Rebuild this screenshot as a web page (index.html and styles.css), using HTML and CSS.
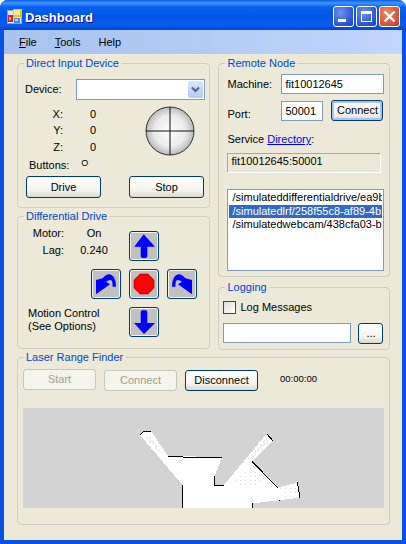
FILE: index.html
```html
<!DOCTYPE html>
<html lang="en">
<head>
  <meta charset="UTF-8">
  <title>Dashboard</title>
  <link rel="stylesheet" href="styles.css">
</head>
<body>
  <div class="window">
    <div class="titlebar">
      <svg class="app-icon" width="16" height="16" viewBox="0 0 16 16">
        <rect x="0" y="1" width="15" height="14" fill="#8fa3c8"/>
        <rect x="1" y="2" width="13" height="12" fill="#dfe6f2"/>
        <rect x="1" y="6" width="5" height="7" fill="#d8261c"/>
        <rect x="2" y="8" width="2" height="3" fill="#f7b0a0"/>
        <rect x="6" y="0" width="9" height="8" fill="#f5c400"/>
        <rect x="7" y="1" width="6" height="5" fill="#ffe98a"/>
        <rect x="7" y="9" width="6" height="5" fill="#4f86d8"/>
        <rect x="8" y="10" width="3" height="2" fill="#bcd4f5"/>
      </svg>
      <span class="title">Dashboard</span>
      <div class="caption-btns">
        <span class="cap-btn">
          <svg width="19" height="19" viewBox="0 0 19 19"><rect x="4" y="12" width="8" height="3" fill="#fff"/></svg>
        </span>
        <span class="cap-btn">
          <svg width="19" height="19" viewBox="0 0 19 19"><path d="M4 4h11v11H4z M5 7v7h9V7z" fill="#fff" fill-rule="evenodd"/></svg>
        </span>
        <span class="cap-btn cap-close">
          <svg width="19" height="19" viewBox="0 0 19 19"><path d="M4.500 4.500l10 10M14.500 4.500l-10 10" stroke="#fff" stroke-width="2.400"/></svg>
        </span>
      </div>
    </div>

    <div class="menubar">
      <span><u>F</u>ile</span>
      <span><u>T</u>ools</span>
      <span>Help</span>
    </div>

    <div class="client">
      <div class="top-row">
        <div class="col col-left">
          <fieldset class="group group-input">
            <legend>Direct Input Device</legend>
            <div class="input-body">
              <div class="device-row">
                <label class="device-label">Device:</label>
                <div class="combo">
                  <span class="combo-btn">
                    <svg width="15" height="17" viewBox="0 0 15 17"><path d="M4 6.500l3.500 3.500L11 6.500" fill="none" stroke="#4d6185" stroke-width="2"/></svg>
                  </span>
                </div>
              </div>
              <div class="axes-row">
                <div class="axes">
                  <span class="axis-name">X:</span><span>0</span>
                  <span class="axis-name">Y:</span><span>0</span>
                  <span class="axis-name">Z:</span><span>0</span>
                </div>
                <svg class="joystick" width="50" height="50" viewBox="0 0 50 50">
                  <defs>
                    <radialGradient id="ball" cx="50%" cy="50%" r="50%">
                      <stop offset="0" stop-color="#fdfdfd"/>
                      <stop offset="0.65" stop-color="#ebebeb"/>
                      <stop offset="1" stop-color="#b8b8b8"/>
                    </radialGradient>
                  </defs>
                  <circle cx="25" cy="25" r="24" fill="url(#ball)" stroke="#333" stroke-width="1"/>
                  <path d="M25 1v48M1 25h48" stroke="#111" stroke-width="1"/>
                </svg>
              </div>
              <div class="buttons-line">
                <span>Buttons:</span><span class="buttons-val">O</span>
              </div>
              <div class="drive-row">
                <button class="btn btn-drive">Drive</button>
                <button class="btn btn-drive">Stop</button>
              </div>
            </div>
          </fieldset>

          <fieldset class="group group-drive">
            <legend>Differential Drive</legend>
            <div class="drive-pad">
              <div class="drive-stats">
                <span class="stat-name">Motor:</span><span class="stat-val">On</span>
                <span class="stat-name">Lag:</span><span class="stat-val">0.240</span>
              </div>
              <button class="arrow arrow-up">
                <svg width="28" height="28" viewBox="1 1 28 28"><path d="M14.700 3.300L26 15.700h-7.700V25q0 2-3.300 2t-3.300-2v-9.300H5.300z" fill="#0000ff"/></svg>
              </button>
              <button class="arrow arrow-left">
                <svg width="28" height="28" viewBox="1 1 28 28"><path d="M5 11l6.700-1.700Q15 5 19 5.300 25 7 25 17.700h-3.500Q22 11.500 19.500 11 17 11 15 12.700l4 2.600L5 25.300z" fill="#0000ff"/></svg>
              </button>
              <button class="arrow">
                <svg width="28" height="28" viewBox="1 1 28 28"><path d="M11 5h8l6 6v8l-6 6h-8l-6-6v-8z" fill="#ff0000" stroke="#a00000" stroke-width="0.600"/></svg>
              </button>
              <button class="arrow">
                <svg width="28" height="28" viewBox="1 1 28 28"><g transform="matrix(-1 0 0 1 30 0)"><path d="M5 11l6.700-1.700Q15 5 19 5.300 25 7 25 17.700h-3.500Q22 11.500 19.500 11 17 11 15 12.700l4 2.600L5 25.300z" fill="#0000ff"/></g></svg>
              </button>
              <div class="motion-note">Motion Control<br>(See Options)</div>
              <button class="arrow arrow-down">
                <svg width="28" height="28" viewBox="1 1 28 28"><path d="M11.700 5q0-2 3.300-2t3.300 2v11H26L15 27 5 16h6.700z" fill="#0000ff"/></svg>
              </button>
            </div>
          </fieldset>
        </div>

        <div class="col col-right">
          <fieldset class="group group-remote">
            <legend>Remote Node</legend>
            <div class="remote-body">
              <div class="form-row">
                <label class="form-label">Machine:</label>
                <input class="field field-machine" value="fit10012645">
              </div>
              <div class="form-row port-row">
                <label class="form-label port-label">Port:</label>
                <input class="field field-port" value="50001">
                <button class="btn btn-default">Connect</button>
              </div>
              <div class="service-line">Service <a href="#">Directory</a>:</div>
              <div class="readonly-box">fit10012645:50001</div>
              <ul class="service-list">
                <li>/simulateddifferentialdrive/ea9b4</li>
                <li class="selected">/simulatedlrf/258f55c8-af89-4b1</li>
                <li>/simulatedwebcam/438cfa03-b0</li>
              </ul>
            </div>
          </fieldset>

          <fieldset class="group group-logging">
            <legend>Logging</legend>
            <div class="logging-body">
              <div class="log-check">
                <span class="checkbox"></span>
                <span>Log Messages</span>
              </div>
              <div class="log-file">
                <input class="field field-log">
                <button class="btn btn-browse">...</button>
              </div>
            </div>
          </fieldset>
        </div>
      </div>

      <fieldset class="group group-laser">
        <legend>Laser Range Finder</legend>
        <div class="laser-body">
          <div class="laser-bar">
            <button class="btn btn-laser btn-start" disabled>Start</button>
            <button class="btn btn-laser" disabled>Connect</button>
            <button class="btn btn-laser">Disconnect</button>
            <span class="timer">00:00:00</span>
          </div>
          <svg class="scan" width="361" height="100" viewBox="23 408 361 100" shape-rendering="crispEdges">
            <defs>
              <pattern id="dither" width="3" height="2" patternUnits="userSpaceOnUse">
                <rect width="1" height="1" fill="#d9d9d9"/>
                <rect x="2" y="1" width="1" height="1" fill="#e4e4e4"/>
              </pattern>
              <pattern id="sparse" width="5" height="4" patternUnits="userSpaceOnUse">
                <rect width="1" height="1" fill="#dcdcdc"/>
              </pattern>
            </defs>
            <path d="M182.500 508V485L140 435L144 431H151L168 456H183L222 457.500L214.300 476.700V485H224L266 434.500L272.500 440.500L252 461.500L277.700 487.700L297.400 482.700L300 497.700L279 500.300L252.700 503.300V508z" fill="#fff"/>
            <path d="M145 437L149 436L163 454L160 453z" fill="url(#dither)"/>
            <path d="M266 438L269 441L252 458L249 458z" fill="url(#dither)"/>
            <path d="M234 480L249 465L266 483L240 488z" fill="url(#sparse)"/>
            <path d="M280 488L296 485L298 496L284 497z" fill="url(#sparse)"/>
            <path d="M140 435L144 431H151M168 456H183M183 457H222M214.500 476V485.500H224M267 434L273 441M252 461.500L277.700 487.700M297.500 482.500L300 497.700M279 500.500H280M182.500 485V508M252.700 503V508" fill="none" stroke="#000" stroke-width="1"/>
          </svg>
        </div>
      </fieldset>
    </div>
  </div>
</body>
</html>
```

FILE: styles.css
```css
html, body {
  margin: 0;
  padding: 0;
  background: #fff;
}

body {
  font-family: "Liberation Sans", Arial, sans-serif;
  font-size: 11px;
  line-height: 13px;
  color: #000;
}

.window {
  width: 406px;
  height: 544px;
  display: flex;
  flex-direction: column;
  background: #0a50e2;
  border-radius: 8px 8px 0 0;
  overflow: hidden;
}

/* title bar */
.titlebar {
  box-sizing: border-box;
  height: 30px;
  flex: none;
  display: flex;
  align-items: center;
  padding: 3px 6px 0 7px;
  background: linear-gradient(180deg, #0a5ce0 0, #3d95ff 3px, #0a62f0 7px, #0055e5 16px, #0a5cf0 25px, #0046c8 30px);
}

.app-icon {
  flex: none;
}

.title {
  margin-left: 2px;
  padding-top: 1px;
  font-size: 13px;
  font-weight: bold;
  color: #fff;
  text-shadow: 1px 1px 0 #0f1089;
}

.caption-btns {
  margin-left: auto;
  display: flex;
  gap: 2px;
}

.cap-btn {
  width: 21px;
  height: 21px;
  box-sizing: border-box;
  border: 1px solid #fff;
  border-radius: 3px;
  background: radial-gradient(circle at 35% 30%, #6e93ec, #2a54d8 70%, #1d3fc0);
}

.cap-btn svg {
  display: block;
}

.cap-close {
  background: radial-gradient(circle at 35% 30%, #e98a6c, #d9502c 70%, #b8381c);
}

/* menu */
.menubar {
  height: 24px;
  flex: none;
  margin: 0 4px;
  padding-left: 15px;
  display: flex;
  align-items: center;
  gap: 18px;
  background: linear-gradient(90deg, #a7c3ee, #b2cbf5 50%, #c2d5fd);
}

/* client area */
.client {
  flex: 1;
  margin: 0 4px 4px;
  padding: 3px 12px 0 13px;
  background: #ece9d8;
  display: flex;
  flex-direction: column;
  gap: 1px;
}

.top-row {
  display: flex;
  gap: 8px;
}

.col {
  display: flex;
  flex-direction: column;
}

.col-left {
  width: 194px;
  gap: 2px;
}

.col-right {
  width: 172px;
  gap: 4px;
}

.group {
  box-sizing: border-box;
  margin: 0;
  padding: 0;
  min-width: 0;
  border: 1px solid #d0d0bf;
  border-radius: 4px;
}

.group legend {
  margin-left: 6px;
  padding: 0 2px;
  color: #0046d5;
  line-height: 13px;
}

.group-input {
  height: 151px;
}

.input-body {
  padding: 9px 0 0 7px;
}

.group-drive {
  height: 139px;
}

.group-remote {
  height: 220px;
}

.remote-body {
  padding: 4px 0 0 8px;
}

.group-logging {
  height: 69px;
}

.logging-body {
  padding: 7px 0 0 4px;
}

.group-laser {
  height: 174px;
}

.laser-body {
  padding: 5px 0 0 5px;
}

/* controls */
.btn {
  box-sizing: border-box;
  height: 22px;
  margin: 0;
  padding: 0;
  font: inherit;
  color: #000;
  border: 1px solid #003c74;
  border-radius: 3px;
  background: linear-gradient(180deg, #fff, #f3f2ec 70%, #dcd8ce);
}

.btn[disabled] {
  border-color: #c9c7ba;
  background: #f5f4ea;
  color: #a1a192;
}

.btn-default {
  width: 52px;
  height: 21px;
  margin-left: 8px;
  box-shadow: inset 0 0 0 2px #a9c3ea;
}

.field {
  box-sizing: border-box;
  height: 20px;
  margin: 0;
  padding: 0 3px;
  font: inherit;
  color: #000;
  border: 1px solid #7f9db9;
  background: #fff;
  border-radius: 0;
  outline: none;
}

/* direct input */
.device-row {
  display: flex;
  height: 21px;
  align-items: center;
}

.device-label {
  width: 51px;
}

.combo {
  box-sizing: border-box;
  width: 129px;
  height: 21px;
  border: 1px solid #7f9db9;
  background: #fff;
  display: flex;
  justify-content: flex-end;
  padding: 1px;
}

.combo-btn {
  width: 15px;
  height: 17px;
  border-radius: 2px;
  background: linear-gradient(180deg, #dbe5fd, #b4c8f6);
}

.combo-btn svg {
  display: block;
}

.axes-row {
  display: flex;
  margin-top: 6px;
  height: 50px;
}

.axes {
  width: 120px;
  display: grid;
  grid-template-columns: 38px 27px;
  grid-auto-rows: 16.500px;
  align-items: center;
  justify-content: start;
}

.axis-name {
  text-align: right;
}

.axes span:nth-child(even) {
  padding-left: 27px;
}

.joystick {
  flex: none;
}

.buttons-line {
  margin-top: 3px;
  padding-left: 4px;
  display: flex;
  height: 13px;
  align-items: center;
}

.buttons-val {
  margin-left: 12px;
  margin-top: -4px;
  font-size: 9px;
}

.drive-row {
  margin-top: 4px;
  display: flex;
  gap: 28px;
  padding-left: 1px;
}

.btn-drive {
  width: 75px;
}

/* differential drive */
.drive-pad {
  display: grid;
  grid-template-columns: 65px 30px 30px 30px;
  grid-template-rows: 34px 30px 30px;
  column-gap: 8px;
  row-gap: 8px;
  padding-top: 4px;
}

.drive-stats {
  grid-column: 1 / span 2;
  display: grid;
  grid-template-columns: 46px 57px;
  grid-auto-rows: 14px;
  row-gap: 3px;
}

.stat-name {
  text-align: right;
}

.stat-val {
  text-align: center;
  padding-left: 3px;
}

.arrow {
  box-sizing: border-box;
  width: 30px;
  height: 30px;
  margin: 0;
  padding: 0;
  border: 1px solid #003c74;
  border-radius: 3px;
  background: #c0c0c0;
  box-shadow: inset 0 0 0 1px #f4f3ee;
}

.arrow svg {
  display: block;
}

.arrow-up {
  grid-column: 3;
  margin-top: 4px;
}

.arrow-left {
  grid-column: 2;
}

.motion-note {
  grid-column: 1 / span 2;
  padding-left: 10px;
}

.arrow-down {
  grid-column: 3;
}

/* remote node */
.form-row {
  display: flex;
  align-items: center;
  height: 20px;
}

.form-label {
  width: 54px;
  flex: none;
}

.field-machine {
  width: 103px;
}

.port-row {
  margin-top: 6px;
  height: 21px;
}

.port-label {
  padding-top: 7px;
}

.field-port {
  width: 42px;
  margin-top: 1px;
}

.service-line {
  margin-top: 12px;
}

.service-line a {
  color: #0000ff;
}

.readonly-box {
  box-sizing: border-box;
  width: 154px;
  height: 20px;
  margin-top: 7px;
  padding: 1px 3px;
  border: 1px solid;
  border-color: #aca899 #fff #fff #aca899;
}

.service-list {
  box-sizing: border-box;
  width: 157px;
  height: 82px;
  margin: 16px 0 0;
  padding: 1px;
  list-style: none;
  border: 1px solid #7f9db9;
  background: #fff;
  overflow: hidden;
}

.service-list li {
  height: 13.500px;
  padding-left: 3px;
  white-space: nowrap;
  overflow: hidden;
}

.service-list .selected {
  background: #316ac5;
  color: #fff;
}

/* logging */
.log-check {
  display: flex;
  align-items: center;
  gap: 4px;
  height: 13px;
}

.checkbox {
  box-sizing: border-box;
  width: 13px;
  height: 13px;
  border: 1px solid #1c5180;
  background: linear-gradient(135deg, #dcdcd7, #fff);
}

.log-file {
  margin-top: 9px;
  display: flex;
  gap: 7px;
}

.field-log {
  width: 128px;
}

.btn-browse {
  width: 25px;
  height: 21px;
}

/* laser */
.laser-bar {
  display: flex;
  gap: 8px;
  height: 22px;
  align-items: flex-start;
}

.btn-laser {
  width: 73px;
  height: 21px;
  margin-top: 1px;
}

.btn-start {
  margin-top: 0;
}

.timer {
  margin-left: 14px;
  margin-top: 3px;
  font-size: 9.500px;
}

.scan {
  display: block;
  margin-top: 17px;
  background: #d3d3d3;
}
```
